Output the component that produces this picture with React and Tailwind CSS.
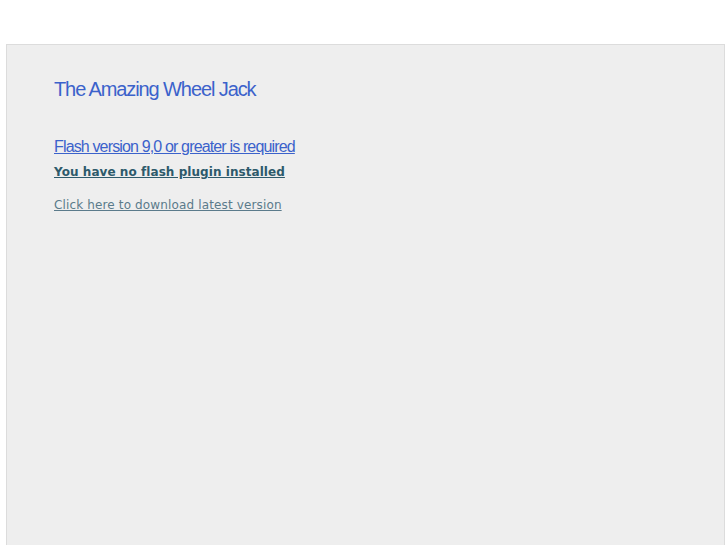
export default function App() {
  return (
    <div className="h-[545px] w-[727px] overflow-hidden bg-white pt-[44px] pl-[6px] pr-[2px]">
      <div className="h-full border border-[#dcdcdc] border-b-0 bg-[#eeeeee] pl-[47px] pt-[31px]">
        <h1
          className="text-[20px] leading-[26px] tracking-[-1.1px] text-[#3b62cb]"
          style={{ fontFamily: '"Liberation Sans", Arial, sans-serif' }}
        >
          The Amazing Wheel Jack
        </h1>
        <div className="mt-[33px]" style={{ fontFamily: '"Liberation Sans", Arial, sans-serif' }}>
          <a href="#" className="text-[16px] leading-[20px] tracking-[-0.85px] text-[#3b62cb] underline">
            Flash version 9,0 or greater is required
          </a>
        </div>
        <div className="mt-[0px]" style={{ fontFamily: '"DejaVu Sans", Verdana, sans-serif' }}>
          <a href="#" className="text-[12px] font-bold leading-[20px] tracking-[0.06px] text-[#2d5a6b] underline">
            You have no flash plugin installed
          </a>
        </div>
        <div className="mt-[9px]" style={{ fontFamily: '"DejaVu Sans", Verdana, sans-serif' }}>
          <a href="#" className="text-[12px] leading-[18px] tracking-[0.14px] text-[#5b7b8b] underline">
            Click here to download latest version
          </a>
        </div>
      </div>
    </div>
  );
}
